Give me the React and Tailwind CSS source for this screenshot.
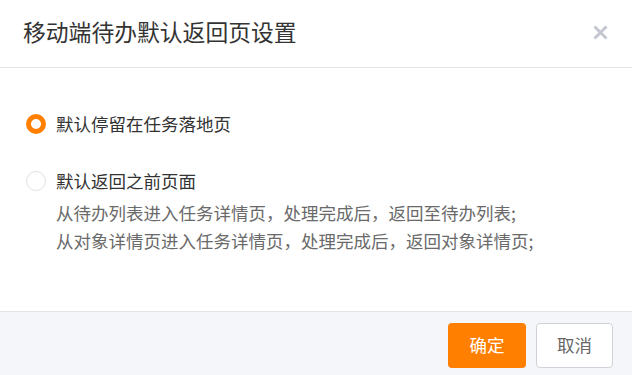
import React from "react";

export default function App() {
  return (
    <div
      className="w-[632px] h-[375px] bg-white flex flex-col overflow-hidden"
      style={{ fontFamily: '"Noto Sans CJK SC", "Noto Sans", sans-serif' }}
    >
      <div className="h-[68px] shrink-0 border-b border-[#e4e5e9] flex items-center justify-between pl-[23px] pr-[24px] pb-[4px]">
        <div className="text-[22.8px] leading-[28px] text-[#333333]">移动端待办默认返回页设置</div>
        <svg width="15" height="15" viewBox="0 0 15 15" className="mt-[1px]">
          <path d="M1.5 1.5 L13.5 13.5 M13.5 1.5 L1.5 13.5" stroke="#c3c7cf" strokeWidth="3" strokeLinecap="butt" />
        </svg>
      </div>
      <div className="flex-1 flex flex-col pl-[26px] pt-[42px]">
        <div className="flex items-center h-[28px]">
          <div className="w-[20px] h-[20px] rounded-full border-[5px] border-[#ff8000] bg-white" />
          <div className="ml-[10px] text-[17.5px] leading-[28px] text-[#333333]">默认停留在任务落地页</div>
        </div>
        <div className="flex items-center h-[28px] mt-[29px]">
          <div className="w-[20px] h-[20px] rounded-full border border-[#dfe1e6] bg-white" />
          <div className="ml-[10px] text-[17.5px] leading-[28px] text-[#333333]">默认返回之前页面</div>
        </div>
        <div className="ml-[30px] mt-[4px] text-[17.5px] leading-[28px] text-[#6a6a6a]">
          <div>从待办列表进入任务详情页，处理完成后，返回至待办列表;</div>
          <div>从对象详情页进入任务详情页，处理完成后，返回对象详情页;</div>
        </div>
      </div>
      <div className="h-[64px] shrink-0 bg-[#f5f6fa] border-t border-[#e2e4ea] flex items-start justify-end pt-[11px] pr-[19px] gap-[10px]">
        <button className="w-[78px] h-[45px] rounded-[4px] bg-[#ff8000] text-white text-[17.5px] flex items-center justify-center">
          确定
        </button>
        <button className="w-[77px] h-[45px] rounded-[4px] bg-white border border-[#cfd2d8] text-[#666666] text-[17.5px] flex items-center justify-center">
          取消
        </button>
      </div>
    </div>
  );
}
